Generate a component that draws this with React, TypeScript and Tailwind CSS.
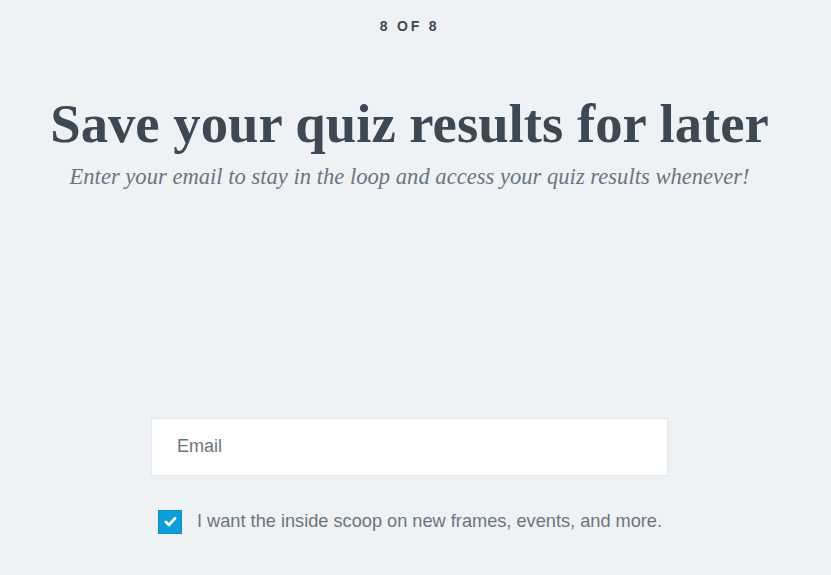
import React from 'react'

const App = () => {
    return (
        <div className="min-h-[575px] w-full bg-[#eef2f5] flex flex-col items-center pr-[12px]">
            <div className="pt-[16px] text-[14px] leading-[20px] font-semibold tracking-[0.2em] text-[#3d4855] font-['Liberation_Sans',sans-serif]">
                8 OF 8
            </div>
            <h1 className="mt-[52px] text-[54.7px] leading-[72px] font-bold text-[#3d4855] font-['Liberation_Serif',serif] whitespace-nowrap">
                Save your quiz results for later
            </h1>
            <p className="text-[22.6px] italic text-[#6b7580] font-['Liberation_Serif',serif] whitespace-nowrap">
                Enter your email to stay in the loop and access your quiz results whenever!
            </p>
            <div className="mt-[224px] w-[517px] flex flex-col">
                <input
                    type="email"
                    placeholder="Email"
                    className="h-[58px] w-full bg-white border border-[#e2e7eb] px-[25px] text-[18px] text-[#3d4855] placeholder:text-[#6b7580] outline-none font-['Liberation_Sans',sans-serif]"
                />
                <label className="mt-[32px] ml-[7px] flex items-center gap-[15px] cursor-pointer">
                    <span className="w-[24px] h-[24px] bg-[#0a9fdc] border border-[#0b8cc2] flex items-center justify-center">
                        <svg width="13" height="11" viewBox="0 0 14 12" fill="none">
                            <path d="M2 6.5 L5.3 9.8 L12 2.5" stroke="white" strokeWidth="3" strokeLinecap="round" strokeLinejoin="round" />
                        </svg>
                    </span>
                    <span className="text-[18.2px] text-[#6b7580] font-['Liberation_Sans',sans-serif] whitespace-nowrap">
                        I want the inside scoop on new frames, events, and more.
                    </span>
                </label>
            </div>
        </div>
    )
}

export default App
